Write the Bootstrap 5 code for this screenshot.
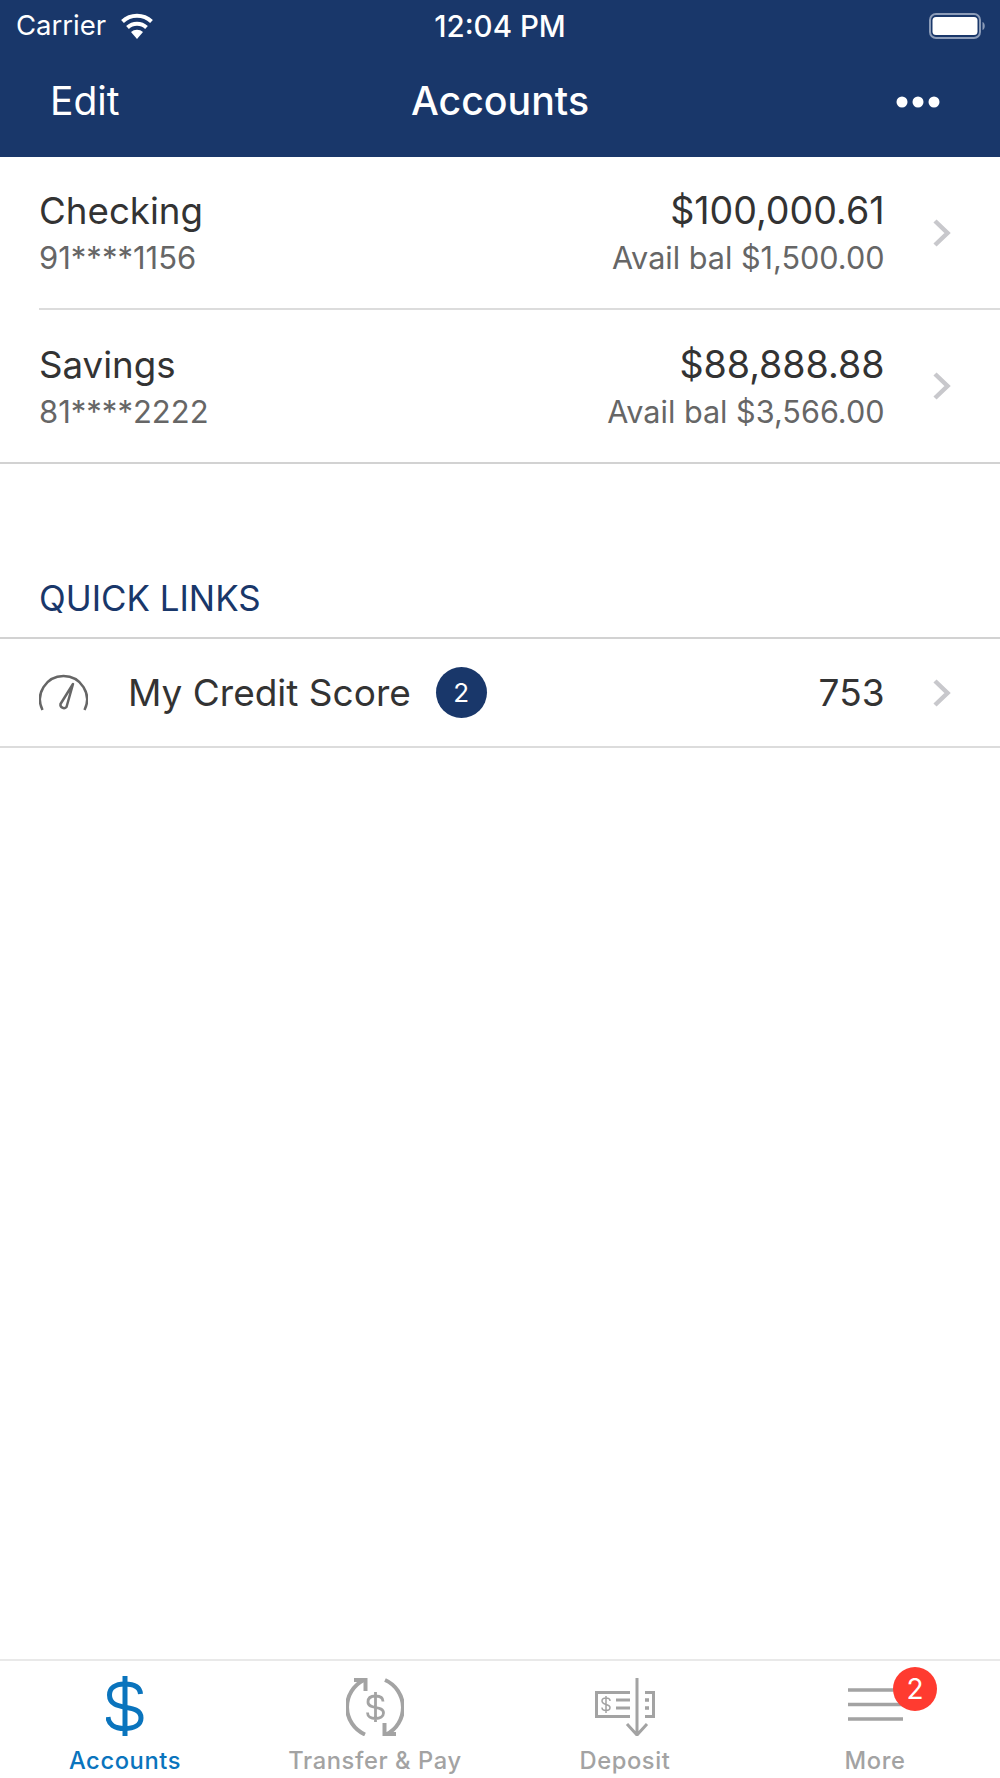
<!DOCTYPE html>
<html>
<head>
    <meta charset="UTF-8">
    <meta name="viewport" content="width=device-width, initial-scale=1">
    <title>Accounts</title>
    <link href="https://cdn.jsdelivr.net/npm/bootstrap@5.3.3/dist/css/bootstrap.min.css" rel="stylesheet">
    <style>
        body {
            font-family: Inter, "Liberation Sans", sans-serif;
            color: #333;
            background: #fff;
        }
        .app-screen {
            width: 1000px;
            height: 1778px;
            overflow: hidden;
        }
        .app-screen > * {
            flex-shrink: 0;
        }
        .app-header {
            height: 157px;
            background-color: #19376a;
            color: #fff;
        }
        .status-row {
            height: 52px;
            padding: 0 13px;
            font-size: 27.5px;
        }
        .status-side {
            width: 300px;
        }
        .status-left {
            padding-left: 3px;
        }
        .wifi-icon {
            margin-left: 13px;
        }
        .status-time {
            font-size: 29.5px;
            font-weight: 500;
        }
        .title-row {
            height: 105px;
            padding: 0 50px 6px;
        }
        .title-side {
            width: 120px;
            font-size: 39px;
        }
        .title-main {
            font-size: 39.3px;
            font-weight: 500;
        }
        .dots-icon {
            margin-right: 10px;
        }
        .acct-first {
            height: 153px;
            padding-left: 39px;
        }
        .acct-second {
            height: 154px;
            padding-left: 39px;
            border-bottom: 2px solid #d2d2d2;
        }
        .acct-inner {
            height: 100%;
            padding-right: 48px;
        }
        .line-partial {
            border-bottom: 2px solid #dcdcdc;
        }
        .acct-name {
            font-size: 36.7px;
            line-height: 48px;
        }
        .acct-num {
            font-size: 31px;
            line-height: 40px;
            margin-top: 3px;
            color: #666;
        }
        .acct-bal {
            font-size: 37.6px;
            line-height: 48px;
        }
        .acct-avail {
            font-size: 30.6px;
            line-height: 40px;
            margin-top: 3px;
            color: #666;
        }
        .chevron-box {
            width: 20px;
            margin-left: 47.5px;
            line-height: 0;
        }
        .links-title {
            height: 175px;
            padding: 0 39px 19px;
            font-size: 34.9px;
            line-height: 40px;
            color: #19376a;
            border-bottom: 2px solid #d2d2d2;
        }
        .score-row {
            height: 109px;
            padding: 0 48px 0 39px;
            border-bottom: 2px solid #dcdcdc;
            font-size: 37px;
        }
        .score-name {
            margin-left: 40px;
        }
        .score-badge {
            width: 51px;
            height: 51px;
            margin-left: 25px;
            border-radius: 50%;
            background: #19376a;
            color: #fff;
            font-size: 26px;
        }
        .tab-bar {
            height: 119px;
            border-top: 2px solid #e9e9e9;
            margin-top: 911px;
            color: #a3a3a3;
        }
        .tab-cell {
            width: 250px;
            position: relative;
        }
        .tab-icon {
            height: 75px;
        }
        .tab-label {
            margin-top: 10px;
            font-size: 23.7px;
            font-weight: 500;
            line-height: 30px;
            letter-spacing: .6px;
        }
        .tab-on {
            color: #0a74bd;
        }
        .more-lines {
            margin-bottom: 15px;
        }
        .more-badge {
            position: absolute;
            top: 6px;
            left: 143px;
            width: 44px;
            height: 44px;
            border-radius: 50%;
            background: #ff3b30;
            color: #fff;
            font-size: 28px;
        }
    </style>
</head>
<body>
    <div class="app-screen d-flex flex-column">
        <div class="app-header">
            <div class="status-row d-flex align-items-center justify-content-between">
                <div class="status-side status-left d-flex align-items-center">
                    <span>Carrier</span>
                    <svg class="wifi-icon" width="36" height="28" viewBox="0 0 36 28">
                        <path d="M18 27l-6-7a9 9 0 0 1 12 0z" fill="#fff"/>
                        <path d="M8.500 15.500a14 14 0 0 1 19 0M3.500 9.500a21 21 0 0 1 29 0" fill="none" stroke="#fff" stroke-width="4"/>
                    </svg>
                </div>
                <span class="status-time">12:04 PM</span>
                <div class="status-side d-flex justify-content-end">
                    <svg width="58" height="28" viewBox="0 0 58 28">
                        <rect x="1" y="2" width="50" height="24" rx="6" fill="none" stroke="#8c9cb8" stroke-width="2"/>
                        <rect x="3.500" y="5" width="45" height="18" rx="3.500" fill="#fff"/>
                        <path d="M53.500 10c3 1 3 7 0 8z" fill="#8c9cb8"/>
                    </svg>
                </div>
            </div>
            <div class="title-row d-flex align-items-center justify-content-between">
                <span class="title-side">Edit</span>
                <span class="title-main">Accounts</span>
                <div class="title-side d-flex justify-content-end">
                    <svg class="dots-icon" width="44" height="14" viewBox="0 0 44 14">
                        <circle cx="6" cy="7" r="5.500" fill="#fff"/>
                        <circle cx="22" cy="7" r="5.500" fill="#fff"/>
                        <circle cx="38" cy="7" r="5.500" fill="#fff"/>
                    </svg>
                </div>
            </div>
        </div>

        <div class="acct-first">
            <div class="acct-inner line-partial d-flex align-items-center">
                <div class="flex-grow-1">
                    <div class="acct-name">Checking</div>
                    <div class="acct-num">91****1156</div>
                </div>
                <div class="text-end">
                    <div class="acct-bal">$100,000.61</div>
                    <div class="acct-avail">Avail bal $1,500.00</div>
                </div>
                <div class="chevron-box">
                    <svg width="20" height="30" viewBox="0 0 20 30"><path d="M3 3 15.500 15 3 27" fill="none" stroke="#c8c8cc" stroke-width="4.500"/></svg>
                </div>
            </div>
        </div>
        <div class="acct-second">
            <div class="acct-inner d-flex align-items-center">
                <div class="flex-grow-1">
                    <div class="acct-name">Savings</div>
                    <div class="acct-num">81****2222</div>
                </div>
                <div class="text-end">
                    <div class="acct-bal">$88,888.88</div>
                    <div class="acct-avail">Avail bal $3,566.00</div>
                </div>
                <div class="chevron-box">
                    <svg width="20" height="30" viewBox="0 0 20 30"><path d="M3 3 15.500 15 3 27" fill="none" stroke="#c8c8cc" stroke-width="4.500"/></svg>
                </div>
            </div>
        </div>

        <div class="links-title d-flex align-items-end">QUICK LINKS</div>
        <div class="score-row d-flex align-items-center">
            <svg width="49" height="37" viewBox="0 0 49 37">
                <path d="M3.500 36A23.500 23.500 0 1 1 45.500 36" fill="none" stroke="#666" stroke-width="2.500"/>
                <path d="M34 10 27.500 33a3.500 3.500 0 0 1-6-3z" fill="none" stroke="#666" stroke-width="2.500" stroke-linejoin="round"/>
            </svg>
            <span class="score-name">My Credit Score</span>
            <span class="score-badge d-flex align-items-center justify-content-center">2</span>
            <span class="ms-auto">753</span>
            <div class="chevron-box">
                <svg width="20" height="30" viewBox="0 0 20 30"><path d="M3 3 15.500 15 3 27" fill="none" stroke="#c8c8cc" stroke-width="4.500"/></svg>
            </div>
        </div>

        <div class="tab-bar d-flex">
            <div class="tab-cell text-center tab-on">
                <div class="tab-icon d-flex align-items-end justify-content-center">
                    <svg width="38" height="60" viewBox="0 0 38 60">
                        <path d="M19 0v60" stroke="currentColor" stroke-width="5" fill="none"/>
                        <path d="M34.500 18C34 11 27.500 8 18.500 8 9.500 8 3.500 12 3.500 19 3.500 37 35 26 35 42 35 49 28 52.500 18.500 52.500 8 52.500 2.500 48 2 41" stroke="currentColor" stroke-width="5" fill="none"/>
                    </svg>
                </div>
                <div class="tab-label">Accounts</div>
            </div>
            <div class="tab-cell text-center">
                <div class="tab-icon d-flex align-items-end justify-content-center">
                    <svg width="58" height="58" viewBox="0 0 58 58">
                        <path d="M19 56.500A30 30 0 0 1 18 2" stroke="currentColor" stroke-width="4" fill="none"/>
                        <path d="M8 2H19.500V13" stroke="currentColor" stroke-width="4" fill="none"/>
                        <path d="M39 2A30 30 0 0 1 40 56.500" stroke="currentColor" stroke-width="4" fill="none"/>
                        <path d="M50 56H38.500V45" stroke="currentColor" stroke-width="4" fill="none"/>
                        <path d="M29.500 14v30M37 23.500C37 20 34 18 29.500 18S22 20 22 24C22 32 37.500 27 37.500 35 37.500 38.500 34 40.500 29.500 40.500S21.500 38.500 21.500 34.500" stroke="currentColor" stroke-width="2.800" fill="none"/>
                    </svg>
                </div>
                <div class="tab-label">Transfer &amp; Pay</div>
            </div>
            <div class="tab-cell text-center">
                <div class="tab-icon d-flex align-items-end justify-content-center">
                    <svg width="60" height="58" viewBox="0 0 60 58">
                        <path d="M35 14.500H1.500v24H35M50 14.500h8.500v24H50" stroke="currentColor" stroke-width="3" fill="none"/>
                        <path d="M42 0v57M32 46 42 57 52 46" stroke="currentColor" stroke-width="3" fill="none" stroke-linejoin="round"/>
                        <path d="M21 22h14M21 30h14" stroke="currentColor" stroke-width="3" fill="none"/>
                        <path d="M50 22h4M50 30h4" stroke="currentColor" stroke-width="3.500" fill="none"/>
                        <path d="M15 23c0-2-1.500-3-4-3s-4 1-4 3c0 4.500 8 2.500 8 6.500 0 2-2 3-4 3s-4-1-4-3M11 18v17" stroke="currentColor" stroke-width="1.500" fill="none"/>
                    </svg>
                </div>
                <div class="tab-label">Deposit</div>
            </div>
            <div class="tab-cell text-center">
                <div class="tab-icon d-flex align-items-end justify-content-center">
                    <svg class="more-lines" width="55" height="33" viewBox="0 0 55 33">
                        <path d="M0 2h55M0 16.500h55M0 31h55" stroke="currentColor" stroke-width="3.500" fill="none"/>
                    </svg>
                </div>
                <div class="tab-label">More</div>
                <span class="more-badge d-flex align-items-center justify-content-center">2</span>
            </div>
        </div>
    </div>
    <script src="https://cdn.jsdelivr.net/npm/bootstrap@5.3.3/dist/js/bootstrap.bundle.min.js"></script>
</body>
</html>
